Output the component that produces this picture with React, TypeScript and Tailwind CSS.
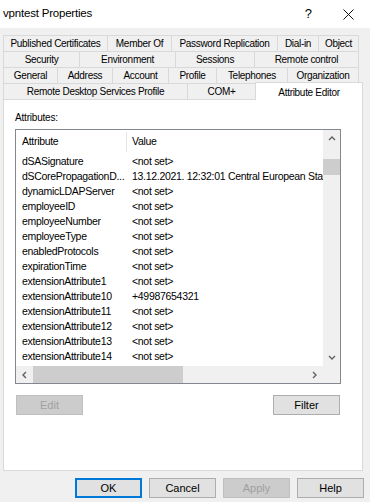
import { FC } from "react";

type Tab = { label: string; w: string };

const tabRows: Tab[][] = [
  [
    { label: "Published Certificates", w: "w-[104px]" },
    { label: "Member Of", w: "w-[64px]" },
    { label: "Password Replication", w: "w-[106px]" },
    { label: "Dial-in", w: "w-[41px]" },
    { label: "Object", w: "w-[41px]" },
  ],
  [
    { label: "Security", w: "w-[76px]" },
    { label: "Environment", w: "w-[96px]" },
    { label: "Sessions", w: "w-[79px]" },
    { label: "Remote control", w: "w-[105px]" },
  ],
  [
    { label: "General", w: "w-[54px]" },
    { label: "Address", w: "w-[55px]" },
    { label: "Account", w: "w-[56px]" },
    { label: "Profile", w: "w-[48px]" },
    { label: "Telephones", w: "w-[71px]" },
    { label: "Organization", w: "w-[72px]" },
  ],
];

const attributes: [string, string][] = [
  ["dSASignature", "<not set>"],
  ["dSCorePropagationD...", "13.12.2021. 12:32:01 Central European Standard Time"],
  ["dynamicLDAPServer", "<not set>"],
  ["employeeID", "<not set>"],
  ["employeeNumber", "<not set>"],
  ["employeeType", "<not set>"],
  ["enabledProtocols", "<not set>"],
  ["expirationTime", "<not set>"],
  ["extensionAttribute1", "<not set>"],
  ["extensionAttribute10", "+49987654321"],
  ["extensionAttribute11", "<not set>"],
  ["extensionAttribute12", "<not set>"],
  ["extensionAttribute13", "<not set>"],
  ["extensionAttribute14", "<not set>"],
];

const Chevron: FC<{ dir: "up" | "down" | "left" | "right" }> = ({ dir }) => {
  const pts = {
    up: "1,5 4,2 7,5",
    down: "1,2 4,5 7,2",
    left: "5,1 2,4 5,7",
    right: "2,1 5,4 2,7",
  }[dir];
  return (
    <svg width="8" height="8" viewBox="0 0 8 8">
      <polyline points={pts} fill="none" stroke="#606060" strokeWidth="1.4" />
    </svg>
  );
};

const Btn: FC<{ label: string; disabled?: boolean; focused?: boolean }> = ({
  label,
  disabled,
  focused,
}) => (
  <div
    className={
      disabled
        ? "w-[67px] h-[20px] flex items-center justify-center border border-[#bfbfbf] bg-[#cccccc] text-[#a0a0a0] text-[11px]"
        : focused
        ? "w-[67px] h-[20px] flex items-center justify-center border border-[#0078d7] shadow-[inset_0_0_0_1px_#0078d7] bg-[#e1e1e1] text-black text-[11px]"
        : "w-[67px] h-[20px] flex items-center justify-center border border-[#adadad] bg-[#e1e1e1] text-black text-[11px]"
    }
  >
    {label}
  </div>
);

const App: FC = () => {
  return (
    <div className="w-[370px] h-[502px] bg-[#f0f0f0] flex flex-col font-['Liberation_Sans',Arial,sans-serif] text-black overflow-hidden">
      {/* title bar */}
      <div className="h-[28px] bg-white flex items-center pl-[3px]">
        <span className="text-[11.5px] tracking-[-0.2px]">vpntest Properties</span>
        <span className="ml-auto mr-[31px] text-[13px]">?</span>
        <svg width="11" height="11" viewBox="0 0 11 11" className="mr-[16px]">
          <path d="M0.5 0.5 L10.5 10.5 M10.5 0.5 L0.5 10.5" stroke="#111" strokeWidth="1" />
        </svg>
      </div>

      {/* tabs */}
      <div className="mt-[7px] pl-[3px] flex flex-col text-[10px] tracking-[-0.3px]">
        {tabRows.map((row, i) => (
          <div key={i} className="flex h-[16px]">
            {row.map((t, j) => (
              <div
                key={t.label}
                className={`${t.w} h-[16px] flex items-center justify-center border-t border-l border-[#d9d9d9] ${
                  j === row.length - 1 ? "border-r" : ""
                }`}
              >
                {t.label}
              </div>
            ))}
          </div>
        ))}
        <div className="flex h-[16px] items-end">
          <div className="w-[184px] h-[16px] flex items-center justify-center border-t border-l border-[#d9d9d9]">
            Remote Desktop Services Profile
          </div>
          <div className="w-[68px] h-[16px] flex items-center justify-center border-t border-l border-[#d9d9d9]">
            COM+
          </div>
          <div className="relative z-10 w-[108px] h-[18px] -mb-px flex items-start justify-center pt-[2px] bg-white border-t border-x border-[#d9d9d9]">
            Attribute Editor
          </div>
        </div>
      </div>

      {/* panel */}
      <div className="ml-[3px] w-[360px] h-[372px] bg-white border border-[#d9d9d9] flex flex-col pt-[11px] pl-[11px]">
        <div className="h-[14px] leading-[14px] text-[10px] tracking-[-0.2px]">Attributes:</div>
        <div className="mt-[4px] w-[326px] h-[255px] border border-[#828790] flex flex-col text-[10.5px] tracking-[-0.3px]">
          <div className="flex flex-1 min-h-0">
            <div className="flex-1 overflow-hidden flex flex-col">
              <div className="h-[24px] flex items-center shrink-0">
                <div className="w-[110px] pl-[6px]">Attribute</div>
                <div className="w-px h-[20px] bg-[#e5e5e5]" />
                <div className="pl-[5px]">Value</div>
              </div>
              {attributes.map(([a, v]) => (
                <div key={a} className="h-[15px] flex items-center shrink-0 whitespace-nowrap">
                  <div className="w-[111px] shrink-0 pl-[6px]">{a}</div>
                  <div className="pl-[5px]">{v}</div>
                </div>
              ))}
            </div>
            <div className="w-[17px] bg-[#f0f0f0] flex flex-col items-center">
              <div className="h-[17px] flex items-center justify-center">
                <Chevron dir="up" />
              </div>
              <div className="flex-1 w-full pt-[12px]">
                <div className="h-[16px] w-full bg-[#cdcdcd]" />
              </div>
              <div className="h-[17px] flex items-center justify-center">
                <Chevron dir="down" />
              </div>
            </div>
          </div>
          <div className="h-[17px] flex bg-[#f0f0f0]">
            <div className="w-[17px] flex items-center justify-center">
              <Chevron dir="left" />
            </div>
            <div className="flex-1 flex items-stretch">
              <div className="w-[150px] bg-[#cdcdcd]" />
            </div>
            <div className="w-[17px] flex items-center justify-center">
              <Chevron dir="right" />
            </div>
            <div className="w-[17px]" />
          </div>
        </div>
        <div className="mt-[11px] w-[325px] flex justify-between pl-[1px]">
          <Btn label="Edit" disabled />
          <Btn label="Filter" />
        </div>
      </div>

      {/* bottom buttons */}
      <div className="mt-[7px] ml-[75px] flex gap-[7px]">
        <Btn label="OK" focused />
        <Btn label="Cancel" />
        <Btn label="Apply" disabled />
        <Btn label="Help" />
      </div>
    </div>
  );
};

export default App;
